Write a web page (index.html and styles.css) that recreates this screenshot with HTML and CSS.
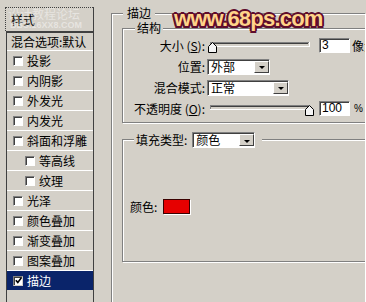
FILE: index.html
```html
<!DOCTYPE html>
<html lang="zh-CN">

<head>
    <meta charset="UTF-8">
    <title>图层样式 - 描边</title>
    <link rel="stylesheet" href="styles.css">
</head>

<body>
    <div class="dialog">
        <div class="style-list">
            <div class="list-head">样式</div>
            <ul class="list">
                <li class="item blend">混合选项:默认</li>
                <li class="item"><span class="check"></span>投影</li>
                <li class="item"><span class="check"></span>内阴影</li>
                <li class="item"><span class="check"></span>外发光</li>
                <li class="item"><span class="check"></span>内发光</li>
                <li class="item"><span class="check"></span>斜面和浮雕</li>
                <li class="item sub"><span class="check"></span>等高线</li>
                <li class="item sub"><span class="check"></span>纹理</li>
                <li class="item"><span class="check"></span>光泽</li>
                <li class="item"><span class="check"></span>颜色叠加</li>
                <li class="item"><span class="check"></span>渐变叠加</li>
                <li class="item"><span class="check"></span>图案叠加</li>
                <li class="item selected">
                    <span class="check on">
                        <svg width="7" height="7" viewBox="0 0 7 7"><path d="M0.8 3.2l2 2.2 3.6-4.6" stroke="#000" stroke-width="1.6" fill="none"/></svg>
                    </span>描边
                </li>
            </ul>
        </div>

        <div class="group stroke">
            <div class="legend">描边</div>

            <div class="group inner struct">
                <div class="legend">结构</div>
                <div class="row">
                    <span class="lbl">大小 (<u>S</u>):</span>
                    <svg class="slider" width="108" height="12" viewBox="0 0 108 12">
                        <rect x="2" y="0" width="100" height="5" fill="#fff"/>
                        <rect x="2" y="0" width="99" height="4" fill="#808080"/>
                        <rect x="3" y="1" width="98" height="3" fill="#d4d0c8"/>
                        <rect x="3" y="1" width="97" height="1" fill="#404040"/>
                        <polygon points="0.5,4.5 4.5,0.5 8.5,4.5 8.5,10.5 0.5,10.5" fill="#f4f4f4" stroke="#000"/>
                    </svg>
                    <span class="num">3</span>
                    <span class="unit">像素</span>
                </div>
                <div class="row">
                    <span class="lbl">位置:</span>
                    <span class="select pos"><span class="val">外部</span><span class="drop"></span></span>
                </div>
                <div class="row">
                    <span class="lbl">混合模式:</span>
                    <span class="select mode"><span class="val">正常</span><span class="drop"></span></span>
                </div>
                <div class="row">
                    <span class="lbl">不透明度 (<u>O</u>):</span>
                    <svg class="slider" width="108" height="12" viewBox="0 0 108 12">
                        <rect x="2" y="0" width="100" height="5" fill="#fff"/>
                        <rect x="2" y="0" width="99" height="4" fill="#808080"/>
                        <rect x="3" y="1" width="98" height="3" fill="#d4d0c8"/>
                        <rect x="3" y="1" width="97" height="1" fill="#404040"/>
                        <polygon points="97.5,4.5 101.5,0.5 105.5,4.5 105.5,10.5 97.5,10.5" fill="#f4f4f4" stroke="#000"/>
                    </svg>
                    <span class="num">100</span>
                    <span class="unit pct">%</span>
                </div>
            </div>

            <div class="group inner fill">
                <div class="legend fill-legend">
                    <span>填充类型:</span>
                    <span class="select kind"><span class="val">颜色</span><span class="drop"></span></span>
                </div>
                <div class="color-row">
                    <span>颜色:</span>
                    <span class="swatch"></span>
                </div>
            </div>
        </div>
    </div>

    <!-- watermarks -->
    <div class="mark">www.68ps.com</div>
    <div class="mark-faint">
        <div class="mf-cn">设计教程论坛</div>
        <div class="mf-en">BBS.16XX8.COM</div>
    </div>
</body>

</html>
```

FILE: styles.css
```css
html,
body,
ul,
li {
    margin: 0;
    padding: 0;
}

body {
    position: relative;
    width: 366px;
    height: 302px;
    overflow: hidden;
    background-color: #d4d0c8;
    color: #000;
    font-size: 12px;
    font-family: "Noto Sans CJK SC", "Liberation Sans", sans-serif;
}

.dialog {
    display: flex;
    align-items: flex-start;
}

/* left: style list */
.style-list {
    flex: none;
    width: 88px;
    margin: 7px 0 0 5px;
    border-right: 1px solid #404040;
}

.style-list>.list-head {
    height: 23px;
    line-height: 23px;
    padding-left: 5px;
    border-top: 1px dotted #404040;
    border-left: 1px dotted #404040;
}

.style-list>.list {
    list-style: none;
    margin-left: 1px;
    height: 269px;
    border-left: 1px solid #404040;
    border-top: 2px solid #404040;
}

.list>.item {
    display: flex;
    align-items: center;
    height: 19px;
    line-height: 19px;
    padding-left: 6px;
    border-bottom: 1px solid #fff;
    white-space: nowrap;
}

.list>.blend {
    height: 17px;
    line-height: 17px;
    padding-left: 4px;
}

.list>.sub {
    padding-left: 18px;
}

.list>.selected {
    background-color: #0a246a;
    color: #fff;
    border-bottom: none;
}

.check {
    display: flex;
    align-items: center;
    justify-content: center;
    flex: none;
    width: 8px;
    height: 8px;
    margin-right: 4px;
    border: 1px solid;
    border-color: #808080 #fff #fff #808080;
    box-shadow: inset 1px 1px 0 #404040;
    background-color: #fff;
}

.check.on {
    border-color: #808080 #d4d0c8 #d4d0c8 #808080;
}

/* right: group boxes */
.group {
    display: flex;
    flex-direction: column;
    border: 1px solid #808080;
    box-shadow: inset 1px 1px 0 #fff, 1px 1px 0 #fff;
}

.group>.legend {
    align-self: flex-start;
    margin-top: -8px;
    line-height: 14px;
    background-color: #d4d0c8;
}

.stroke {
    flex: none;
    width: 243px;
    height: 289px;
    margin: 13px 0 0 17px;
    padding-left: 10px;
    border-right: none;
}

.stroke>.legend {
    margin-left: 1px;
    padding: 0 4px;
}

.inner {
    margin-top: 8px;
    border-right: none;
}

.struct>.legend {
    margin-left: 12px;
    padding: 0 2px;
}

.struct {
    padding-bottom: 3px;
}

.row {
    display: flex;
    align-items: center;
    height: 21px;
    white-space: nowrap;
    overflow: hidden;
}

.row>.lbl {
    flex: none;
    width: 82px;
    text-align: right;
}

.row>.slider {
    flex: none;
    margin: 4px 0 0 3px;
}

.num {
    flex: none;
    width: 27px;
    height: 13px;
    line-height: 13px;
    margin-left: 3px;
    padding-left: 2px;
    border: 1px solid;
    border-color: #808080 #fff #fff #808080;
    box-shadow: inset 1px 1px 0 #404040;
    background-color: #fff;
    font-family: "Liberation Sans", sans-serif;
}

.unit {
    margin-left: 2px;
}

.unit.pct {
    margin-left: 4px;
    font-family: "Liberation Sans", sans-serif;
    font-size: 10px;
}

/* dropdown */
.select {
    display: flex;
    align-items: center;
    flex: none;
    height: 14px;
    border: 1px solid;
    border-color: #808080 #fff #fff #808080;
    box-shadow: inset 1px 1px 0 #404040;
    background-color: #fff;
}

.row>.select {
    margin-left: 2px;
}

.select>.val {
    padding-left: 3px;
    line-height: 14px;
}

.select>.drop {
    display: flex;
    align-items: center;
    justify-content: center;
    margin-left: auto;
    width: 13px;
    height: 10px;
    border: 1px solid;
    border-color: #fff #404040 #404040 #fff;
    background-color: #d4d0c8;
}

.select>.drop::after {
    content: "";
    margin-top: 2px;
    border-left: 3px solid transparent;
    border-right: 3px solid transparent;
    border-top: 3px solid #000;
}

.select.pos {
    width: 61px;
}

.select.mode {
    width: 80px;
}

.select.kind {
    width: 61px;
    margin-left: 5px;
}

.fill {
    margin-top: 16px;
    padding-bottom: 47px;
}

.fill>.fill-legend {
    display: flex;
    align-items: center;
    height: 16px;
    line-height: 16px;
    margin-left: 11px;
    padding: 0 7px 0 2px;
}

.color-row {
    display: flex;
    align-items: center;
    height: 16px;
    margin-top: 50px;
    padding-left: 7px;
}

.swatch {
    width: 25px;
    height: 13px;
    margin-left: 6px;
    border: 1px solid #3a0000;
    background-color: #e60000;
    box-shadow: 1px 1px 0 #fff;
}

/* watermarks over the screenshot */
.mark {
    position: absolute;
    left: 174px;
    top: 8px;
    font-family: "Liberation Sans", sans-serif;
    font-weight: bold;
    font-size: 22px;
    line-height: 22px;
    letter-spacing: -0.8px;
    color: #ffd38a;
    text-shadow:
        2px 0 0 #5e0c2c, -2px 0 0 #5e0c2c, 0 2px 0 #5e0c2c, 0 -2px 0 #5e0c2c,
        1.5px 1.5px 0 #5e0c2c, -1.5px 1.5px 0 #5e0c2c, 1.5px -1.5px 0 #5e0c2c, -1.5px -1.5px 0 #5e0c2c;
}

.mark-faint {
    position: absolute;
    left: 8px;
    top: 8px;
    color: rgba(255, 255, 255, 0.45);
}

.mark-faint>.mf-cn {
    font-size: 12px;
    line-height: 12px;
}

.mark-faint>.mf-en {
    font-family: "Liberation Sans", sans-serif;
    font-weight: bold;
    font-size: 9px;
    line-height: 9px;
    margin: 1px 0 0 2px;
}
```
